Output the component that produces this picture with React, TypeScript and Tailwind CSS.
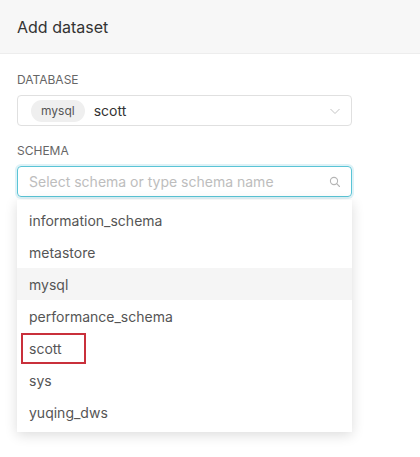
import React from "react"

const schemas = [
  "information_schema",
  "metastore",
  "mysql",
  "performance_schema",
  "scott",
  "sys",
  "yuqing_dws",
]

const ChevronDown = () => (
  <svg width="12" height="12" viewBox="0 0 12 12" fill="none" stroke="#c4c4c4" strokeWidth="1">
    <path d="M1.5 4l4.5 4.5L10.5 4" />
  </svg>
)

const SearchIcon = () => (
  <svg width="12" height="12" viewBox="0 0 12 12" fill="none" stroke="#b5b5b5" strokeWidth="1.1">
    <circle cx="5" cy="5" r="3.6" />
    <path d="M7.7 7.7L10.5 10.5" strokeLinecap="round" />
  </svg>
)

export default function App() {
  return (
    <div className="h-[457px] w-[420px] bg-white font-['Inter',sans-serif] text-[#555]">
      {/* header */}
      <div className="flex h-[54px] items-center border-b border-[#ededed] bg-[#f7f7f7] px-[17px]">
        <h1 className="text-[16px] font-normal text-[#333]">Add dataset</h1>
      </div>

      <div className="w-[352px] pl-[17px]">
        <div className="mt-[18px] text-[12px] leading-[16px] text-[#666]">DATABASE</div>
        <div className="mt-[7px] flex h-[31px] items-center rounded-[4px] border border-[#e0e0e0] pr-[10px] pl-[13px]">
          <span className="flex h-[22px] items-center rounded-full bg-[#efefef] px-[10px] text-[12px] text-[#555]">
            mysql
          </span>
          <span className="ml-[9px] flex-1 text-[14px] text-[#333]">scott</span>
          <ChevronDown />
        </div>

        <div className="mt-[17px] text-[12px] leading-[16px] text-[#666]">SCHEMA</div>
        <div className="mt-[7px] flex h-[31px] items-center rounded-[4px] border border-[#5ac4d6] pr-[10px] pl-[11px] shadow-[0_0_0_2px_rgba(32,167,201,0.15)]">
          <span className="flex-1 text-[14px] text-[#bdbdbd]">Select schema or type schema name</span>
          <SearchIcon />
        </div>

        {/* dropdown */}
        <div className="mt-[3px] bg-white py-[4px] shadow-[0_3px_12px_rgba(0,0,0,0.14)]">
          {schemas.map((s) => (
            <div
              key={s}
              className={
                "flex h-[32px] items-center pl-[12px] text-[14px] " +
                (s === "mysql" ? "bg-[#f5f5f5]" : "")
              }
            >
              {s === "scott" ? (
                <span className="-ml-[8px] flex h-[31px] w-[65px] items-center border-2 border-[#c9303b] pl-[6px]">
                  {s}
                </span>
              ) : (
                s
              )}
            </div>
          ))}
        </div>
      </div>
    </div>
  )
}
